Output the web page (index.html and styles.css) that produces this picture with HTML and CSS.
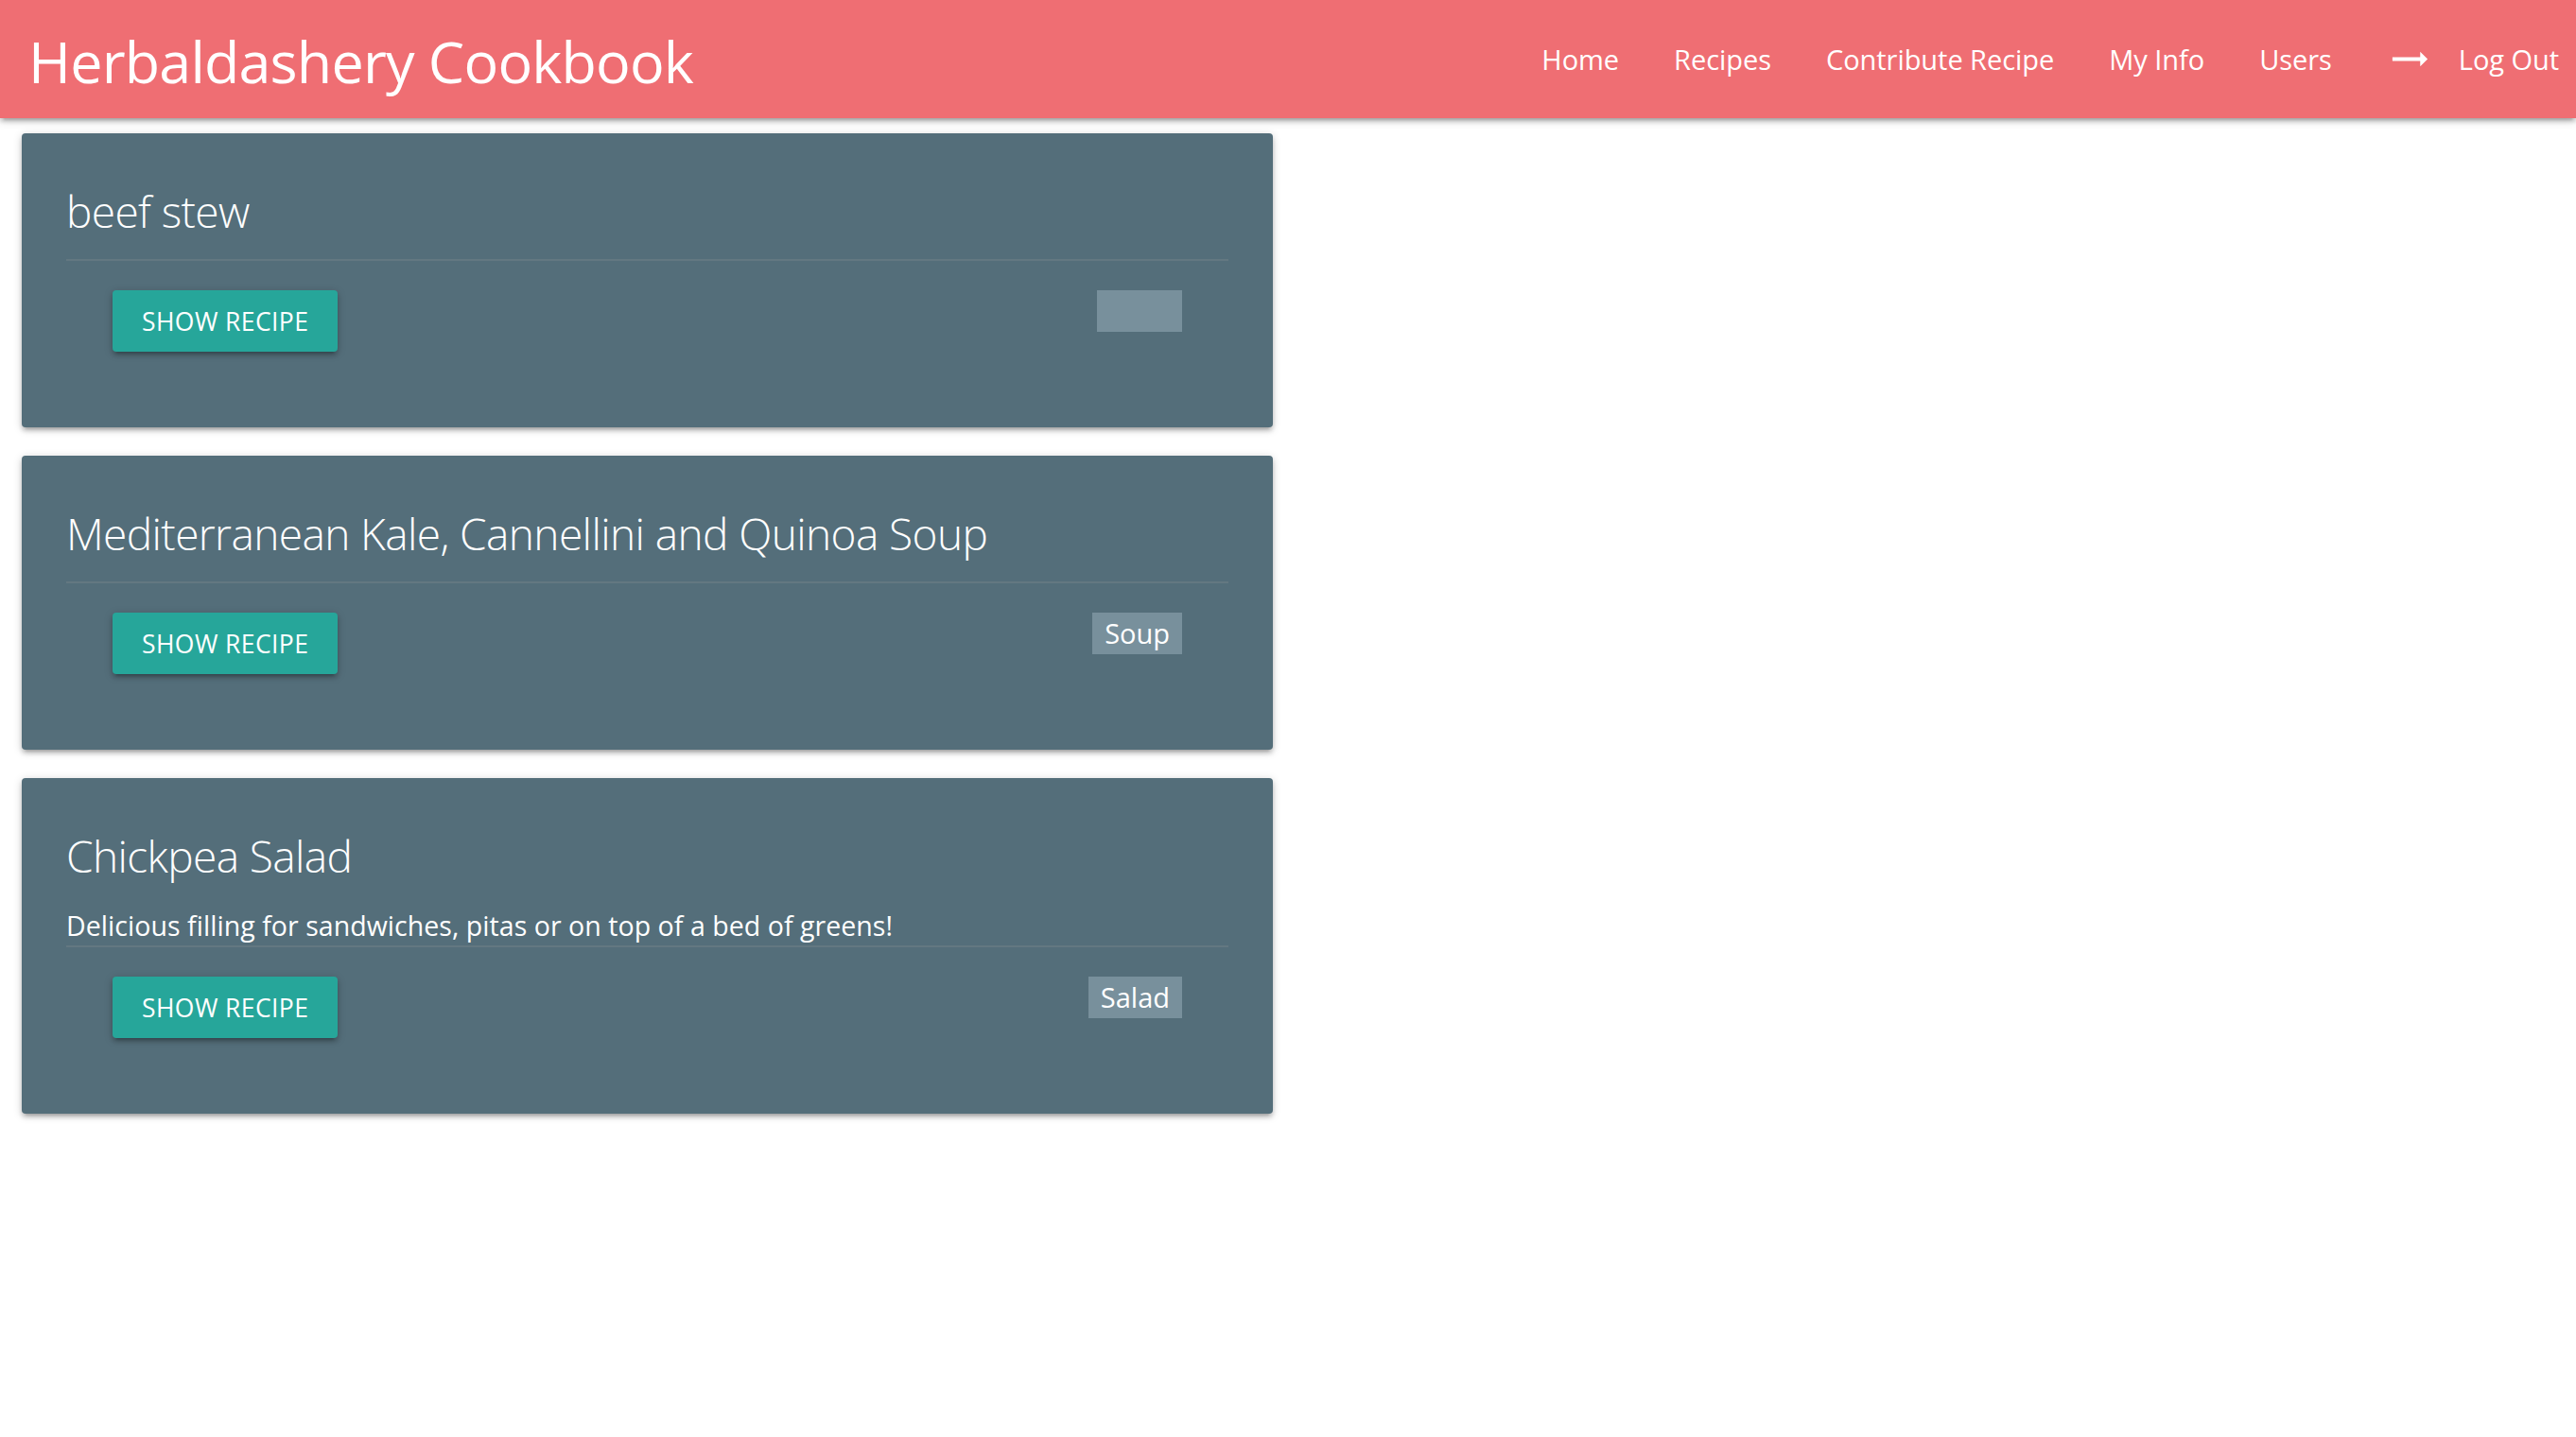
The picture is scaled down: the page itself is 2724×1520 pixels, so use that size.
FILE: index.html
```html
<!DOCTYPE html>
<html lang="en">
<head>
<meta charset="utf-8">
<title>Herbaldashery Cookbook</title>
<link rel="stylesheet" href="styles.css">
</head>
<body>
<nav class="navbar">
  <a class="brand" href="#">Herbaldashery Cookbook</a>
  <ul class="nav-links">
    <li><a href="#">Home</a></li>
    <li><a href="#">Recipes</a></li>
    <li><a href="#">Contribute Recipe</a></li>
    <li><a href="#">My Info</a></li>
    <li><a href="#">Users</a></li>
    <li><a href="#" class="logout"><svg class="arrow" viewBox="0 0 24 24" width="47" height="47"><path d="M22 12l-4-4v3H3v2h15v3z" fill="#fff"/></svg><span>Log Out</span></a></li>
  </ul>
</nav>
<main class="recipes">
  <section class="card">
    <h2 class="card-title">beef stew</h2>
    <div class="card-row">
      <a class="btn" href="#">Show Recipe</a>
      <span class="tag tag-empty"></span>
    </div>
  </section>
  <section class="card">
    <h2 class="card-title">Mediterranean Kale, Cannellini and Quinoa Soup</h2>
    <div class="card-row">
      <a class="btn" href="#">Show Recipe</a>
      <span class="tag">Soup</span>
    </div>
  </section>
  <section class="card">
    <h2 class="card-title with-desc">Chickpea Salad</h2>
    <p class="card-desc">Delicious filling for sandwiches, pitas or on top of a bed of greens!</p>
    <div class="card-row">
      <a class="btn" href="#">Show Recipe</a>
      <span class="tag">Salad</span>
    </div>
  </section>
</main>
</body>
</html>
```
FILE: styles.css
```css
* { box-sizing: border-box; }
html, body { margin: 0; padding: 0; background: #fff; }
body {
  font-family: "Open Sans", "Noto Sans", "Liberation Sans", sans-serif;
  color: #fff;
}
a { color: inherit; text-decoration: none; }

.navbar {
  height: 125px;
  background: #ef6e73;
  display: flex;
  align-items: center;
  justify-content: space-between;
  box-shadow: 0 4px 4px 0 rgba(0,0,0,0.14), 0 6px 2px -4px rgba(0,0,0,0.12), 0 2px 10px 0 rgba(0,0,0,0.2);
  position: relative;
  z-index: 2;
}
.brand {
  padding-left: 30px;
  padding-top: 3px;
  font-size: 61px;
  letter-spacing: -0.8px;
  line-height: 125px;
  white-space: nowrap;
}
.nav-links {
  list-style: none;
  margin: 0;
  padding: 0;
  display: flex;
  height: 125px;
}
.nav-links a {
  display: flex;
  align-items: center;
  height: 125px;
  padding: 0 29px;
  font-size: 29px;
  letter-spacing: -0.05px;
  white-space: nowrap;
}
.nav-links .logout { padding-right: 18px; }
.arrow { margin-right: 29px; display: block; }

.recipes {
  padding: 16px 0 0 23px;
}
.card {
  width: 1323px;
  background: #546e7a;
  padding: 52px 47px 47px;
  margin-bottom: 30px;
  border-radius: 4px;
  box-shadow: 0 4px 4px 0 rgba(0,0,0,0.14), 0 6px 2px -4px rgba(0,0,0,0.12), 0 2px 10px 0 rgba(0,0,0,0.2);
}
.card-title {
  margin: 0 0 21px;
  font-size: 46px;
  letter-spacing: -0.6px;
  font-weight: 300;
  line-height: 60px;
}
.card-title.with-desc { margin-bottom: 24px; }
.card-desc {
  margin: 0 0 1px;
  font-size: 28.5px;
  letter-spacing: 0.05px;
  line-height: 40px;
}
.card-row {
  border-top: 2px solid rgba(160,160,160,0.2);
  padding: 31px 49px 33px;
  display: flex;
  justify-content: space-between;
  align-items: flex-start;
}
.btn {
  display: inline-flex;
  align-items: center;
  height: 65px;
  padding: 0 31px;
  background: #26a69a;
  border-radius: 4px;
  font-size: 26.5px;
  letter-spacing: 0.4px;
  text-transform: uppercase;
  box-shadow: 0 4px 4px 0 rgba(0,0,0,0.14), 0 6px 2px -4px rgba(0,0,0,0.12), 0 2px 10px 0 rgba(0,0,0,0.2);
}
.tag {
  display: inline-block;
  height: 44px;
  line-height: 44px;
  padding: 0 13px;
  background: #78909c;
  font-size: 29px;
}
.tag-empty { width: 90px; }
```
